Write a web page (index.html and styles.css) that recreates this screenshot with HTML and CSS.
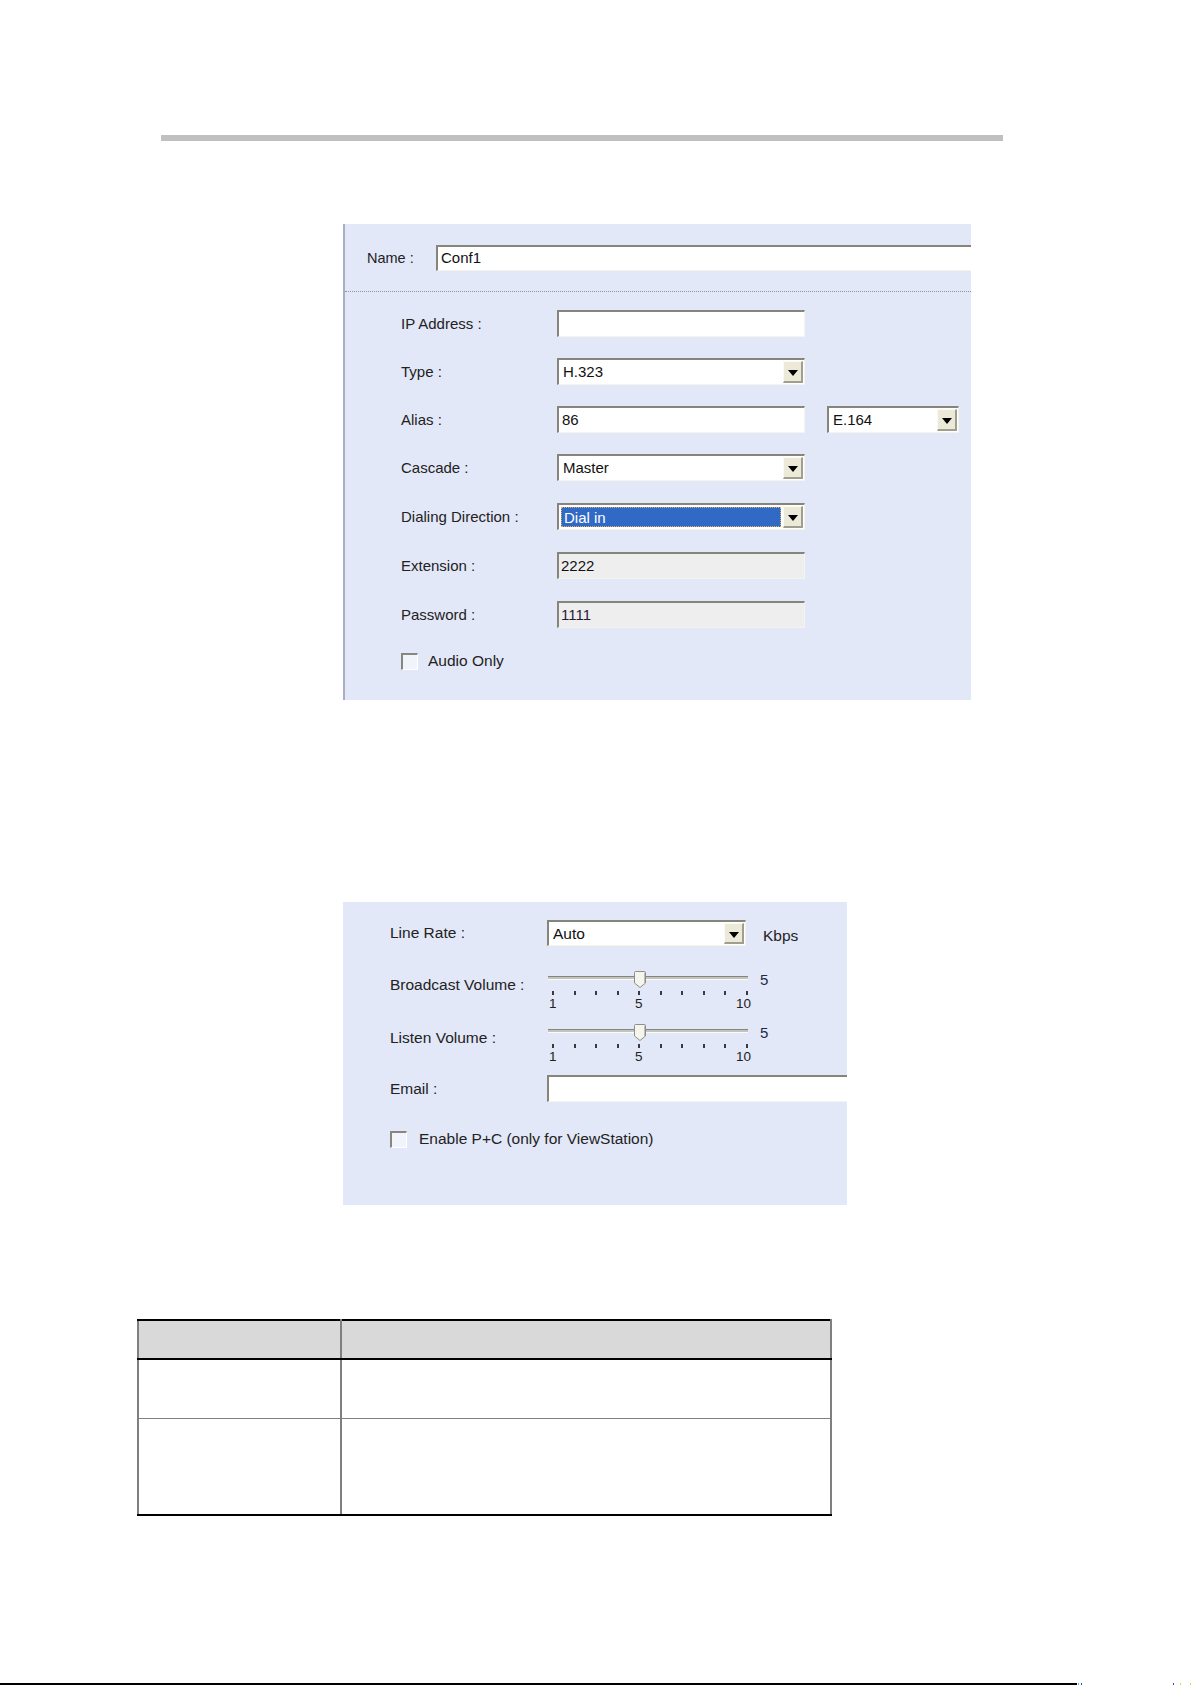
FILE: index.html
```html
<!DOCTYPE html>
<html>
<head>
<meta charset="utf-8">
<link rel="stylesheet" href="styles.css">
</head>
<body>
<div class="page">
  <div class="rule"></div>

  <div class="panel p1">
    <div class="name-row">
      <span class="name-label">Name :</span>
      <div class="field name-field">Conf1</div>
    </div>
    <div class="fields">
      <div class="row">
        <span class="label">IP Address :</span>
        <div class="field w248"></div>
      </div>
      <div class="row">
        <span class="label">Type :</span>
        <div class="field select w248"><span class="val">H.323</span><span class="arrow"></span></div>
      </div>
      <div class="row">
        <span class="label">Alias :</span>
        <div class="field w248">86</div>
        <div class="field select alias-type"><span class="val">E.164</span><span class="arrow"></span></div>
      </div>
      <div class="row">
        <span class="label">Cascade :</span>
        <div class="field select w248"><span class="val">Master</span><span class="arrow"></span></div>
      </div>
      <div class="row">
        <span class="label">Dialing Direction :</span>
        <div class="field select w248 focused"><span class="val sel">Dial in</span><span class="arrow"></span></div>
      </div>
      <div class="row">
        <span class="label">Extension :</span>
        <div class="field w248 disabled">2222</div>
      </div>
      <div class="row">
        <span class="label">Password :</span>
        <div class="field w248 disabled pw">1111</div>
      </div>
      <div class="check-row">
        <span class="checkbox"></span>
        <span class="check-text">Audio Only</span>
      </div>
    </div>
  </div>

  <div class="panel p2">
    <div class="row2 linerate">
      <span class="label2">Line Rate :</span>
      <div class="field select w199"><span class="val">Auto</span><span class="arrow"></span></div>
      <span class="kbps">Kbps</span>
    </div>
    <div class="row2 slider-row">
      <span class="label2 slabel">Broadcast Volume :</span>
      <div class="slider">
        <div class="track"></div>
        <svg class="thumb" width="12" height="17" viewBox="0 0 12 17"><path d="M0.5 1.5 Q0.5 0.5 1.5 0.5 L10.5 0.5 Q11.5 0.5 11.5 1.5 L11.5 12 L6 16.5 L0.5 12 Z" fill="#f5f5f0" stroke="#8e8e86"/><path d="M10.5 1.5 L10.5 12" stroke="#bdbdb5"/></svg>
        <div class="ticks"><i></i><i></i><i></i><i></i><i></i><i></i><i></i><i></i><i></i><i></i></div>
        <span class="tl t1">1</span><span class="tl t5">5</span><span class="tl t10">10</span>
        <span class="sval">5</span>
      </div>
    </div>
    <div class="row2 slider-row listen">
      <span class="label2 slabel">Listen Volume :</span>
      <div class="slider">
        <div class="track"></div>
        <svg class="thumb" width="12" height="17" viewBox="0 0 12 17"><path d="M0.5 1.5 Q0.5 0.5 1.5 0.5 L10.5 0.5 Q11.5 0.5 11.5 1.5 L11.5 12 L6 16.5 L0.5 12 Z" fill="#f5f5f0" stroke="#8e8e86"/><path d="M10.5 1.5 L10.5 12" stroke="#bdbdb5"/></svg>
        <div class="ticks"><i></i><i></i><i></i><i></i><i></i><i></i><i></i><i></i><i></i><i></i></div>
        <span class="tl t1">1</span><span class="tl t5">5</span><span class="tl t10">10</span>
        <span class="sval">5</span>
      </div>
    </div>
    <div class="row2 email">
      <span class="label2">Email :</span>
      <div class="field email-field"></div>
    </div>
    <div class="check-row2">
      <span class="checkbox"></span>
      <span class="check-text2">Enable P+C (only for ViewStation)</span>
    </div>
  </div>

  <table class="doc-table">
    <tr class="head"><th class="c1"></th><th class="c2"></th></tr>
    <tr class="r1"><td class="c1"></td><td class="c2"></td></tr>
    <tr class="r2"><td class="c1"></td><td class="c2"></td></tr>
  </table>

  <div class="footer">
    <div class="footline"></div>
    <span class="dot d1"></span><span class="dot d2"></span>
    <span class="gap"></span>
    <span class="dot d3"></span><span class="dot d4"></span><span class="dot d5"></span>
  </div>
</div>
</body>
</html>
```

FILE: styles.css
```css
html, body {
  margin: 0;
  padding: 0;
  background: #ffffff;
}
.page {
  width: 1192px;
  font-family: "Liberation Sans", Arial, sans-serif;
  color: #222;
}
.rule {
  margin: 135px 0 0 161px;
  width: 842px;
  height: 6px;
  background: #c0c0c0;
}

.panel {
  background: #e3e8f8;
  box-sizing: border-box;
  overflow: hidden;
  margin-left: 343px;
}
.p1 {
  margin-top: 83px;
  width: 628px;
  height: 476px;
  border-left: 2px solid #a7aec6;
}
.name-row {
  display: flex;
  align-items: center;
  height: 68px;
  box-sizing: border-box;
  padding: 21px 0 21px 22px;
  border-bottom: 1px dotted #8d92a8;
}
.name-label {
  width: 69px;
  flex: none;
  white-space: nowrap;
  font-size: 14.5px;
}
.field {
  box-sizing: border-box;
  height: 27px;
  background: #fff;
  border-style: solid;
  border-width: 2px 1px 1px 2px;
  border-color: #85857c #f4f3ec #f4f3ec #85857c;
  font-size: 15px;
  line-height: 23px;
  padding-left: 3px;
  color: #111;
  flex: none;
  white-space: nowrap;
}
.name-field {
  width: 560px;
  height: 26px;
  line-height: 22px;
}
.fields {
  padding: 18px 0 0 56px;
}
.row {
  display: flex;
  align-items: center;
  height: 27px;
  margin-bottom: 21px;
}
.row:nth-child(4), .row:nth-child(5), .row:nth-child(6) { margin-bottom: 22px; }
.label {
  width: 156px;
  font-size: 15px;
  flex: none;
  white-space: nowrap;
}
.w248 { width: 248px; }
.w199 { width: 199px; height: 26px; }
.alias-type {
  width: 132px;
  margin-left: 22px;
}
.select {
  display: flex;
  align-items: stretch;
  padding: 1px;
  line-height: 21px;
}
.select .val {
  flex: 1;
  padding-left: 3px;
}
.select .val.sel {
  background: #316ac5;
  color: #fff;
  border: 1px dotted #d8b060;
  margin: 1px 2px 1px 1px;
  line-height: 19px;
  padding-left: 2px;
}
.arrow {
  width: 20px;
  flex: none;
  box-sizing: border-box;
  background: #ece9d8;
  border-style: solid;
  border-width: 1px 2px 2px 1px;
  border-color: #fbfbf6 #a09e90 #a09e90 #fbfbf6;
  position: relative;
}
.arrow::after {
  content: "";
  position: absolute;
  left: 4px;
  top: 8px;
  border-left: 5px solid transparent;
  border-right: 5px solid transparent;
  border-top: 6px solid #000;
}
.disabled {
  background: #eeeeee;
  padding-left: 2px;
}
.pw { color: #2a1a3a; }

.check-row {
  display: flex;
  align-items: center;
  margin-top: 24px;
}
.checkbox {
  box-sizing: border-box;
  width: 17px;
  height: 17px;
  flex: none;
  background: #f2f4fb;
  border-style: solid;
  border-width: 2px 1px 1px 2px;
  border-color: #87877f #ffffff #ffffff #87877f;
}
.check-text {
  margin-left: 10px;
  font-size: 15.5px;
}

/* panel 2 */
.p2 {
  margin-top: 202px;
  width: 504px;
  height: 303px;
  padding: 18px 0 0 47px;
}
.row2 {
  display: flex;
  align-items: center;
}
.label2 {
  width: 157px;
  flex: none;
  font-size: 15.5px;
  white-space: nowrap;
}
.w199 { font-size: 15.5px; }
.kbps {
  margin-left: 17px;
  font-size: 15.5px;
  padding-top: 5px;
}
.slider-row {
  margin-top: 24px;
  height: 40px;
  align-items: flex-start;
}
.slider-row.listen { margin-top: 13px; }
.slabel {
  line-height: 30px;
}
.slider {
  position: relative;
  width: 240px;
  height: 40px;
  flex: none;
}
.track {
  position: absolute;
  left: 1px;
  top: 6px;
  width: 200px;
  height: 4px;
  box-sizing: border-box;
  background: #c4c4be;
  border-top: 1px solid #85857f;
  border-bottom: 1px solid #fbfbf8;
}
.thumb {
  position: absolute;
  left: 87px;
  top: 1px;
}
.ticks {
  position: absolute;
  left: 5px;
  top: 21px;
  width: 196px;
  display: flex;
  justify-content: space-between;
}
.ticks i {
  display: block;
  width: 2px;
  height: 4px;
  background: #3a3a3a;
}
.tl {
  position: absolute;
  top: 26px;
  font-size: 13.5px;
  line-height: 15px;
  color: #222;
}
.t1 { left: 2px; }
.t5 { left: 88px; }
.t10 { left: 189px; }
.sval {
  position: absolute;
  left: 213px;
  top: 2px;
  font-size: 15px;
  line-height: 16px;
  color: #1e2a44;
}
.email { margin-top: 12px; }
.email-field {
  width: 320px;
  border-right: none;
}
.check-row2 {
  display: flex;
  align-items: center;
  margin-top: 28px;
}
.check-text2 {
  margin-left: 12px;
  font-size: 15.5px;
}

/* table */
.doc-table {
  margin: 114px 0 0 137px;
  width: 695px;
  border-collapse: collapse;
}
.doc-table th, .doc-table td {
  padding: 0;
  border-left: 2px solid #7f7f7f;
  border-right: 2px solid #7f7f7f;
}
.doc-table .c1 { width: 201px; }
.head th {
  height: 37px;
  background: #d9d9d9;
  border-top: 2px solid #000;
  border-bottom: 2px solid #000;
}
.r1 td {
  height: 58px;
  border-bottom: 1px solid #7f7f7f;
}
.r2 td {
  height: 95px;
  border-bottom: 2px solid #000;
}

.footer {
  margin-top: 167px;
  display: flex;
  align-items: flex-end;
  height: 2px;
}
.footline {
  width: 1077px;
  height: 2px;
  background: #000;
}
.dot {
  width: 1px;
  height: 2px;
  display: block;
}
.d1 { background: #26c8c8; margin-left: 1px; }
.d2 { background: #3040e0; margin-left: 2px; }
.gap { width: 91px; }
.d3 { background: #3040e0; }
.d4 { background: #e0d040; margin-left: 6px; }
.d5 { background: #e0d040; margin-left: 9px; }
```
